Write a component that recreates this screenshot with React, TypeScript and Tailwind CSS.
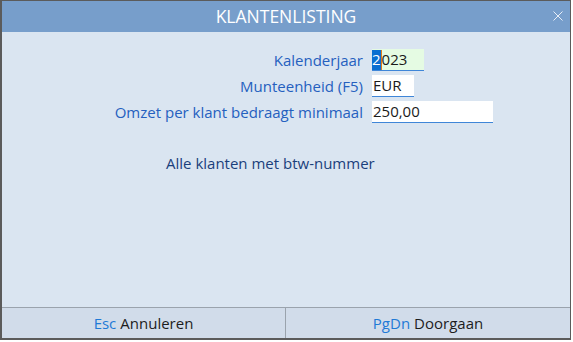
import React from 'react'

const fields = [
  { label: 'Kalenderjaar', value: '2023', width: 'w-[52px]', bg: 'bg-[#e5fbe3]', selected: true },
  { label: 'Munteenheid (F5)', value: 'EUR', width: 'w-[42px]', bg: 'bg-white', selected: false },
  { label: 'Omzet per klant bedraagt minimaal', value: '250,00', width: 'w-[121px]', bg: 'bg-white', selected: false },
]

const App = () => {
  return (
    <div className="w-[573px] h-[342px] bg-white font-['Open_Sans',sans-serif]">
      <div className="w-[571px] h-[340px] flex flex-col border-l-2 border-t border-r border-b-2 border-[#5b5b5b] bg-[#dae5f1]">
        {/* title bar */}
        <div className="relative h-[31px] bg-[#779ecb] flex items-center justify-center">
          <span className="text-white text-[17.5px] leading-none">KLANTENLISTING</span>
          <svg className="absolute right-[7px] top-[10px]" width="10" height="10" viewBox="0 0 10 10">
            <path d="M0.5 0.5 L9.5 9.5 M9.5 0.5 L0.5 9.5" stroke="#e8eef7" strokeWidth="1" />
          </svg>
        </div>

        {/* form */}
        <div className="flex-1 flex flex-col pt-[17px]">
          <div className="flex flex-col gap-[4px]">
            {fields.map((f, idx) => (
              <div className="flex items-center" key={idx}>
                <div className="w-[370px] pr-[9px] text-right text-[15px] text-[#2560bf] leading-none">{f.label}</div>
                <div className={`${f.width} ${f.bg} h-[22px] border-b border-[#3f86d8] flex items-center pl-0 text-[15px] text-[#1a1a1a]`}>
                  {f.selected ? (
                    <>
                      <span className="bg-[#0a6fd1] text-white h-[20px] flex items-center">{f.value.slice(0, 1)}</span>
                      <span className="w-px h-[20px] bg-[#e07a1a]" />
                      <span>{f.value.slice(1)}</span>
                    </>
                  ) : (
                    <span className="pl-[1px]">{f.value}</span>
                  )}
                </div>
              </div>
            ))}
          </div>
          <div className="mt-[29px] pl-[164px] text-[15px] text-[#1b3f7c]">Alle klanten met btw-nummer</div>
        </div>

        {/* footer */}
        <div className="h-[31px] grid grid-cols-[284px_1fr] border-t border-[#9aa3ad] bg-[#d1dcea] text-[15px]">
          <div className="flex items-center justify-center border-r border-[#9aa3ad]">
            <span className="text-[#1f7ad6]">Esc</span>
            <span className="ml-[4px] text-[#1d1d1d]">Annuleren</span>
          </div>
          <div className="flex items-center justify-center">
            <span className="text-[#1f7ad6]">PgDn</span>
            <span className="ml-[4px] text-[#1d1d1d]">Doorgaan</span>
          </div>
        </div>
      </div>
    </div>
  )
}

export default App
